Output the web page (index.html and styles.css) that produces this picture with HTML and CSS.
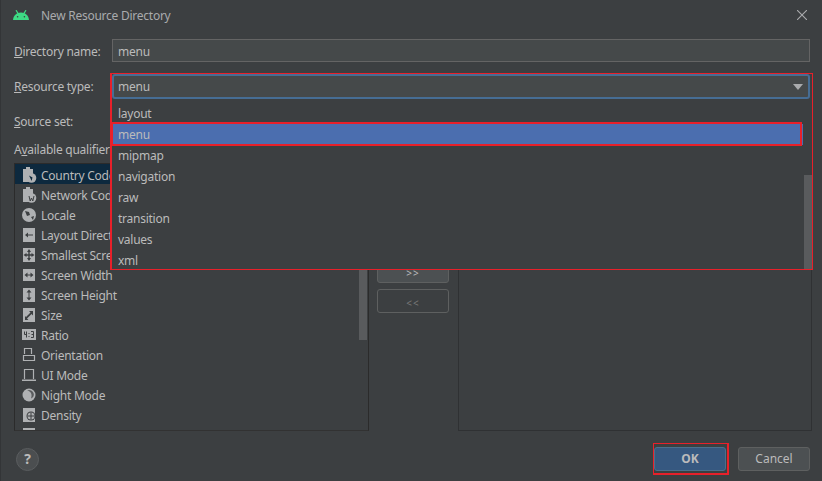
FILE: index.html
```html
<!DOCTYPE html>
<html lang="en">
<head>
<meta charset="utf-8">
<title>New Resource Directory</title>
<link rel="stylesheet" href="styles.css">
</head>
<body>
<svg class="defs" width="0" height="0" aria-hidden="true">
  <defs>
    <symbol id="doc" viewBox="0 0 16 16"><path d="M2 2h3V0h4v2h3v5H8v8H2z" fill="#afb1b3"/></symbol>
  </defs>
</svg>
<div class="dialog">
  <header class="titlebar">
    <svg class="android" viewBox="0 0 16 10" width="16" height="10"><path d="M0 10C0.300 6 3.400 2.600 8 2.600S15.700 6 16 10z" fill="#3ddc84"/><path d="M3 0.200l2.200 3.400M13 0.200l-2.200 3.400" stroke="#3ddc84" stroke-width="1.200"/><circle cx="4.600" cy="6.800" r="0.800" fill="#3c3f41"/><circle cx="11.400" cy="6.800" r="0.800" fill="#3c3f41"/></svg>
    <span class="title">New Resource Directory</span>
    <svg class="close" viewBox="0 0 10 10" width="10" height="10"><path d="M0 0L10 10M10 0L0 10" stroke="#a9abad" stroke-width="1.100"/></svg>
  </header>

  <div class="form-row row-name">
    <label class="label"><u>D</u>irectory name:</label>
    <div class="field">menu</div>
  </div>
  <div class="form-row row-type">
    <label class="label"><u>R</u>esource type:</label>
    <div class="combo"><span>menu</span><i class="arrow"></i></div>
  </div>
  <div class="form-row row-source">
    <label class="label"><u>S</u>ource set:</label>
  </div>
  <div class="form-row row-avail">
    <label class="label">A<u>v</u>ailable qualifiers:</label>
  </div>

  <div class="panels">
    <div class="list-box">
      <ul class="list">
        <li class="item selected"><svg class="ico" viewBox="0 0 16 16"><use href="#doc"/><circle cx="10.500" cy="11" r="4.800" fill="#afb1b3"/><path d="M8 8.500l3.500 2-1 3.500-1-2.500z" fill="#0d293e"/></svg>Country Code</li>
        <li class="item"><svg class="ico" viewBox="0 0 16 16"><use href="#doc"/><circle cx="10.500" cy="11" r="4.800" fill="#afb1b3"/><path d="M8 9l1.200 5 1.300-3 1.300 3 1.200-5" fill="none" stroke="#3c3f41"/></svg>Network Code</li>
        <li class="item"><svg class="ico" viewBox="0 0 16 16"><circle cx="8" cy="8" r="7" fill="#afb1b3"/><path d="M4 4l4 1 1 3-3 1zM10 10l3-1-1 4z" fill="#3c3f41"/></svg>Locale</li>
        <li class="item"><svg class="ico" viewBox="0 0 16 16"><path d="M2 1h12v14H2z" fill="#afb1b3"/><path d="M4 8l3-2.500v2h5v1H7v2z" fill="#3c3f41"/></svg>Layout Direction</li>
        <li class="item"><svg class="ico" viewBox="0 0 16 16"><path d="M2 1h12v14H2z" fill="#afb1b3"/><path d="M8 2l2 3H6zM8 14l2-3H6zM2.500 8l3-2v4zM13.500 8l-3-2v4z" fill="#3c3f41"/><path d="M7.300 4h1.400v8H7.300zM4 7.300h8v1.400H4z" fill="#3c3f41"/></svg>Smallest Screen Width</li>
        <li class="item"><svg class="ico" viewBox="0 0 16 16"><path d="M2 2h12v12H2z" fill="#afb1b3"/><path d="M3.500 8l3-2.500v2h3v-2l3 2.500-3 2.500v-2h-3v2z" fill="#3c3f41"/></svg>Screen Width</li>
        <li class="item"><svg class="ico" viewBox="0 0 16 16"><path d="M2 1h12v14H2z" fill="#afb1b3"/><path d="M8 2.500l2.500 3h-2v5h2l-2.500 3-2.500-3h2v-5h-2z" fill="#3c3f41"/></svg>Screen Height</li>
        <li class="item"><svg class="ico" viewBox="0 0 16 16"><path d="M2 1h12v14H2z" fill="#afb1b3"/><path d="M12 4v4.500l-1.500-1.500L6 11.500 7.500 13H4V9l1 1 4.500-4.500L8 4z" fill="#3c3f41"/></svg>Size</li>
        <li class="item"><svg class="ico" viewBox="0 0 16 16"><path d="M1 2h14v11H1z" fill="#afb1b3"/><path d="M3.500 4.500v3h2M5.500 4.500v6M8 6v1M8 9v1M10 4.500h2.500v6H10M10.500 7.500h2" fill="none" stroke="#3c3f41"/></svg>Ratio</li>
        <li class="item"><svg class="ico" viewBox="0 0 16 16"><path d="M3.500 7V1.500h7V7M2.500 8.500h11v5h-11z" fill="none" stroke="#afb1b3" stroke-width="1.200"/></svg>Orientation</li>
        <li class="item"><svg class="ico" viewBox="0 0 16 16"><path d="M3.500 12V2.500h9V12" fill="none" stroke="#afb1b3" stroke-width="1.200"/><path d="M1 12.500h14V14H1z" fill="#afb1b3"/></svg>UI Mode</li>
        <li class="item"><svg class="ico" viewBox="0 0 16 16"><circle cx="8" cy="8" r="6.500" fill="#afb1b3"/><path d="M6 3.500c4 .5 5.500 4 4 8 2.500-1 3.500-3.500 2.500-5.500C11.500 3.500 8 2 6 3.500z" fill="#5a5c5e"/></svg>Night Mode</li>
        <li class="item"><svg class="ico" viewBox="0 0 16 16"><path d="M2 1h12v14H2z" fill="#afb1b3"/><circle cx="10" cy="9" r="4.500" fill="#3c3f41"/><circle cx="10" cy="9" r="3.500" fill="#afb1b3"/><path d="M10 5.500v7M6.500 9h7" stroke="#3c3f41"/></svg>Density</li>
        <li class="item"><svg class="ico" viewBox="0 0 16 16"><path d="M2 1h12v14H2z" fill="#afb1b3"/></svg>Touch Screen</li>
      </ul>
      <div class="list-scroll"><div class="list-thumb"></div></div>
    </div>
    <div class="transfer">
      <button class="move">&gt;&gt;</button>
      <button class="move off">&lt;&lt;</button>
    </div>
    <div class="chosen"></div>
  </div>

  <footer class="footer">
    <button class="help">?</button>
    <div class="actions">
      <button class="btn primary">OK</button>
      <button class="btn">Cancel</button>
    </div>
  </footer>

  <div class="popup">
    <ul class="options">
      <li>layout</li>
      <li class="current">menu</li>
      <li>mipmap</li>
      <li>navigation</li>
      <li>raw</li>
      <li>transition</li>
      <li>values</li>
      <li>xml</li>
    </ul>
    <div class="popup-scroll"><div class="popup-thumb"></div></div>
  </div>
  <div class="mark mark-popup"></div>
  <div class="mark mark-row"></div>
  <div class="mark mark-ok"></div>
</div>
</body>
</html>
```
FILE: styles.css
```css
* { box-sizing: border-box; }
html, body { margin: 0; padding: 0; }
body { width: 822px; height: 481px; overflow: hidden; background: #3c3f41; }
.defs { position: absolute; }
.dialog {
  position: relative;
  width: 822px;
  height: 481px;
  display: flex;
  flex-direction: column;
  background: #3c3f41;
  border-left: 1px solid #333537;
  color: #bbbbbb;
  font: 12px/16px "Noto Sans", "Noto Sans CJK KR", sans-serif;
  letter-spacing: -0.25px;
}
.titlebar { height: 32px; display: flex; align-items: center; padding: 0 15px 0 12px; flex: none; }
.android { margin-right: 12px; margin-top: -3px; }
.title { flex: 1; color: #a9abad; }
.close { margin-top: -3px; }
.form-row { display: flex; align-items: center; padding: 0 12px 0 13px; flex: none; }
.label { width: 98px; flex: none; white-space: nowrap; }
.row-name { margin-top: 7px; height: 23px; }
.row-name .label { margin-top: 2px; }
.field { flex: 1; height: 23px; padding-left: 5px; line-height: 23px; background: #45494a; border: 1px solid #646464; }
.row-type { margin-top: 13px; height: 23px; }
.row-type .label { margin-top: 1px; }
.combo {
  flex: 1;
  height: 25px;
  padding: 1px 5px 0 4px;
  display: flex;
  align-items: center;
  justify-content: space-between;
  background: #45494a;
  border: 2px solid #466d94;
  border-radius: 3px;
  line-height: 22px;
}
.arrow { width: 0; height: 0; border: 5px solid transparent; border-top: 6px solid #a9abad; border-bottom: 0; }
.row-source { margin-top: 12px; height: 23px; }
.row-avail { margin-top: 9px; height: 16px; }
.panels { flex: none; height: 268px; margin: 5px 10px 0 13px; display: flex; align-items: stretch; }
.list-box { width: 355px; flex: none; border: 1px solid #2b2b2b; border-bottom-color: #323232; position: relative; overflow: hidden; }
.list { list-style: none; margin: 0; padding: 0; }
.item { height: 20px; display: flex; align-items: center; padding: 3px 0 0 6px; white-space: nowrap; color: #bbbbbb; }
.item.selected { background: #0d293e; }
.ico { width: 16px; height: 16px; margin: -2px 4px 0 0; flex: none; }
.list-scroll { position: absolute; top: 0; right: 0; bottom: 0; width: 9px; }
.list-thumb { position: absolute; top: 0; left: 0; right: 1px; height: 176px; background: #595b5d; }
.transfer { width: 89px; flex: none; display: flex; flex-direction: column; justify-content: flex-end; gap: 6px; padding: 0 9px 118px 8px; }
.move { height: 24px; padding: 3px 0 0; background: #4c5052; border: 1px solid #5e6060; border-radius: 3px; color: #bbbbbb; font: 10px/16px "Noto Sans", sans-serif; letter-spacing: 1px; }
.move.off { background: transparent; color: #777777; }
.chosen { flex: 1; border: 1px solid #2f3133; }
.footer { flex: none; height: 50px; display: flex; align-items: center; justify-content: space-between; padding: 6px 12px 0 15px; }
.help { width: 23px; height: 23px; padding: 0; border-radius: 50%; background: #4b4e50; border: 1px solid #5a5d5f; color: #bbbbbb; font: bold 14px/20px "Noto Sans", sans-serif; }
.actions { display: flex; gap: 12px; }
.btn { width: 72px; height: 24px; padding: 0; background: #4c5052; border: 1px solid #5e6060; border-radius: 3px; color: #bbbbbb; font: 12px/16px "Noto Sans", sans-serif; }
.btn.primary { background: #365880; border-color: #4c708c; font-weight: bold; }
.popup { position: absolute; left: 110px; top: 101px; width: 701px; height: 168px; display: flex; background: #3c3f41; }
.options { list-style: none; margin: 0; padding: 2px 0 0; flex: 1; }
.options li { height: 21px; line-height: 22px; padding-left: 7px; color: #bbbbbb; }
.options li.current { background: #4b6eaf; color: #bbbbbb; }
.popup-scroll { width: 9px; position: relative; flex: none; }
.popup-thumb { position: absolute; left: 1px; right: 0; top: 74px; bottom: 0; background: #595b5d; }
.mark { position: absolute; border: 1px solid #e8202a; pointer-events: none; }
.mark-popup { left: 109px; top: 73px; width: 703px; height: 197px; border-left-width: 2px; }
.mark-row { left: 110px; top: 122px; width: 691px; height: 24px; border-width: 2px; }
.mark-ok { left: 652px; top: 443px; width: 76px; height: 32px; border-width: 1px 2px 2px 1px; }
```
